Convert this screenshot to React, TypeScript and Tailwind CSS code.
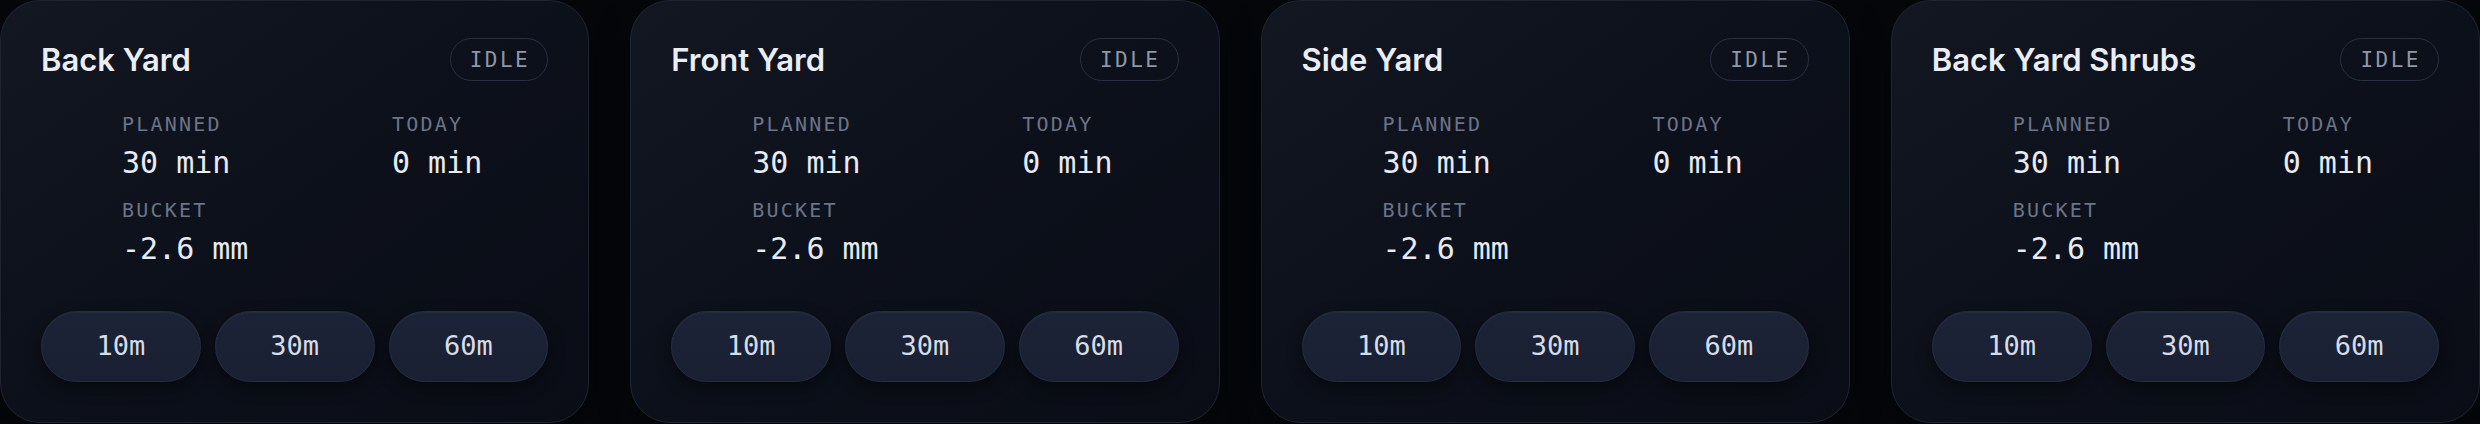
import React from 'react'

const zones = ['Back Yard', 'Front Yard', 'Side Yard', 'Back Yard Shrubs']

function Stat({ label, value }: { label: string; value: string }) {
  return (
    <div className="flex flex-col">
      <span className="text-[20px] leading-[24px] tracking-[0.11em] text-[#6b7488]">{label}</span>
      <span className="mt-[9px] text-[30px] leading-[36px] text-[#e8ebf2]">{value}</span>
    </div>
  )
}

function ZoneCard({ name }: { name: string }) {
  return (
    <div className="flex h-[423px] flex-col rounded-[40px] border border-[#1f2431] bg-gradient-to-br from-[#121722] via-[#0c101a] to-[#0a0d16] px-10 pt-[37px] pb-10 shadow-[0_10px_30px_rgba(0,0,0,0.5)]">
      <div className="flex h-[43px] items-center justify-between">
        <h2 className="mt-[1px] font-['Inter',sans-serif] text-[31px] leading-[36px] font-semibold text-[#e9edf4]">
          {name}
        </h2>
        <span className="flex h-[43px] items-center rounded-full border border-[#283043] pr-[17px] pl-[19px] font-['DejaVu_Sans_Mono',monospace] text-[21px] leading-[24px] tracking-[2.5px] text-[#8e97a8]">
          IDLE
        </span>
      </div>

      <div className="mt-[31px] grid grid-cols-[270px_1fr] gap-y-[17px] pl-[81px] font-['DejaVu_Sans_Mono',monospace]">
        <Stat label="PLANNED" value="30 min" />
        <Stat label="TODAY" value="0 min" />
        <Stat label="BUCKET" value="-2.6 mm" />
      </div>

      <div className="mt-auto grid grid-cols-3 gap-[14px]">
        {['10m', '30m', '60m'].map((t) => (
          <button
            key={t}
            className="flex h-[71px] items-center justify-center rounded-full border border-[#252d40] bg-gradient-to-b from-[#1c2336] to-[#182032] font-['DejaVu_Sans_Mono',monospace] text-[27px] text-[#d7dce6] shadow-[0_6px_16px_rgba(0,0,0,0.45),inset_0_1px_0_rgba(255,255,255,0.04)]"
          >
            {t}
          </button>
        ))}
      </div>
    </div>
  )
}

export default function App() {
  return (
    <div className="h-[424px] w-[2480px] overflow-hidden bg-[#05070b]">
      <div className="grid grid-cols-4 gap-[41px]">
        {zones.map((z) => (
          <ZoneCard key={z} name={z} />
        ))}
      </div>
    </div>
  )
}
